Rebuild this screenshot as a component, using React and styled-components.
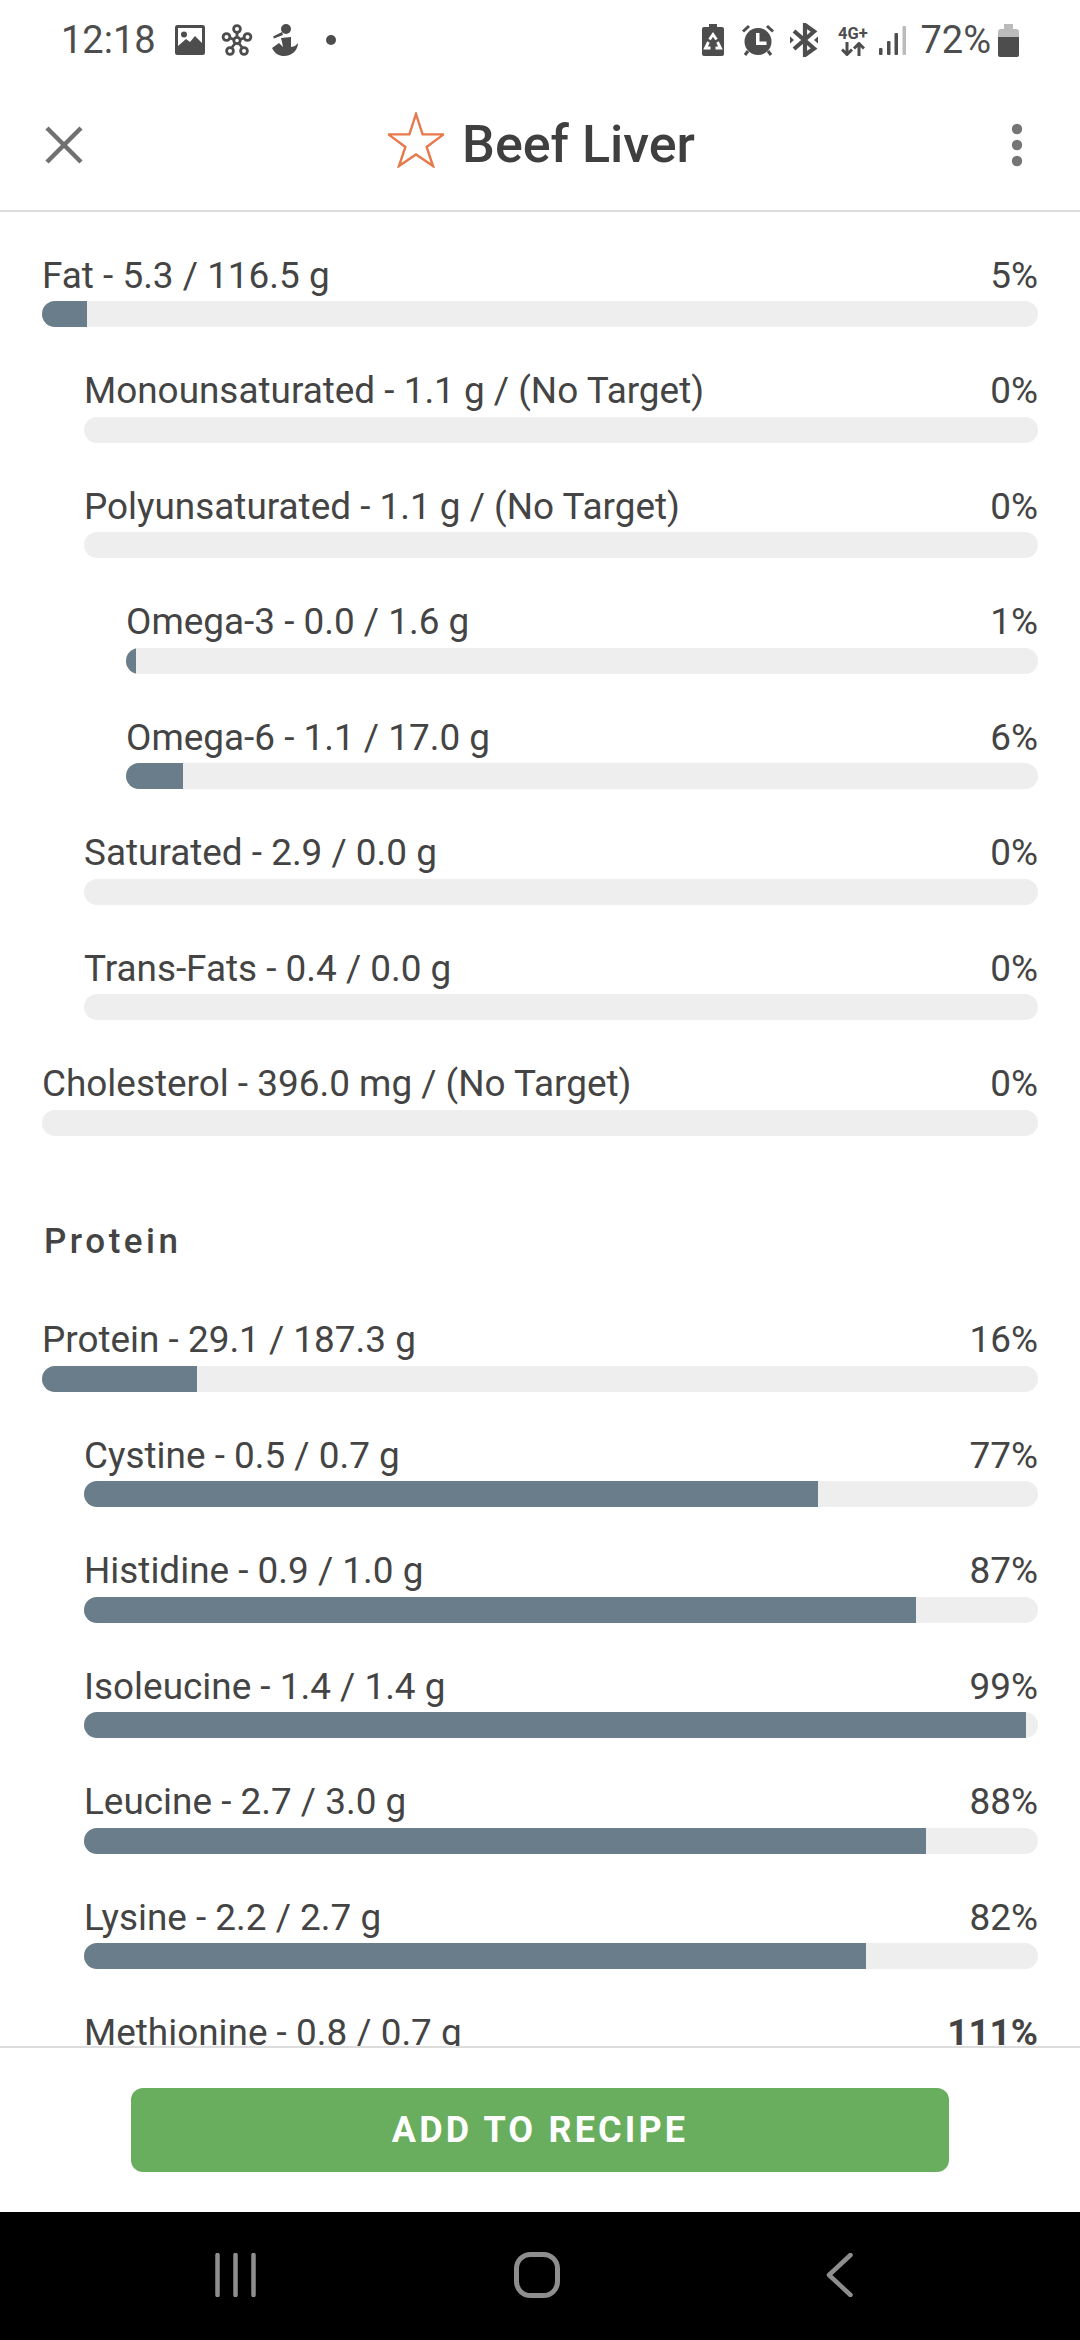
import React from 'react'
import styled, { createGlobalStyle } from 'styled-components'

const GlobalStyle = createGlobalStyle`
  html, body {
    margin: 0;
    padding: 0;
    background: #fff;
  }
  body {
    font-family: Roboto, "Liberation Sans", sans-serif;
  }
`

const Page = styled.div`
  width: 1080px;
  height: 2340px;
  display: flex;
  flex-direction: column;
  background: #fff;
  overflow: hidden;
`

const StatusBar = styled.div`
  height: 80px;
  flex: none;
  display: flex;
  align-items: center;
  justify-content: space-between;
  padding: 0 61px;
  color: #4d4d4d;
  font-size: 38px;
`

const StatusGroup = styled.div`
  display: flex;
  align-items: center;
`

const Slot = styled.span`
  display: flex;
  margin-left: ${p => p.$ml || 0}px;
`

const StatusDot = styled.span`
  width: 10px;
  height: 10px;
  margin-left: 28px;
  border-radius: 50%;
  background: #4d4d4d;
`

const Header = styled.div`
  height: 130px;
  flex: none;
  display: flex;
  align-items: center;
  justify-content: space-between;
  padding: 0 55px 0 44px;
  border-bottom: 2px solid #dcdcdc;
`

const Title = styled.div`
  display: flex;
  align-items: center;
  gap: 18px;
  font-size: 52px;
  font-weight: 500;
  color: #3f3f3f;
  margin-right: 10px;
  padding-bottom: 2px;
`

const StarSlot = styled.span`
  display: flex;
  margin-bottom: 8px;
`

const Scroll = styled.div`
  flex: 1;
  min-height: 0;
  overflow: hidden;
  padding: 38px 42px 0;
`

const Row = styled.div`
  margin-left: ${p => p.$level * 42}px;
  height: 115.5px;
`

const RowText = styled.div`
  display: flex;
  justify-content: space-between;
  align-items: center;
  height: 50px;
  margin-bottom: 1px;
  font-size: 36.9px;
  color: #444;
`

const Pct = styled.span`
  font-weight: ${p => (p.$over ? 700 : 400)};
`

const Track = styled.div`
  height: 26px;
  border-radius: 13px;
  background: #eeeeee;
  overflow: hidden;
`

const Fill = styled.div`
  height: 100%;
  background: #697d8a;
`

const SectionTitle = styled.div`
  font-size: 35px;
  font-weight: 500;
  letter-spacing: 3.5px;
  color: #444;
  margin: 46.5px 0 0 2px;
  height: 94px;
`

const Footer = styled.div`
  height: 166px;
  flex: none;
  box-sizing: border-box;
  border-top: 2px solid #dcdcdc;
  display: flex;
  align-items: center;
  justify-content: center;
  background: #fff;
`

const AddButton = styled.button`
  width: 818px;
  height: 84px;
  border: none;
  border-radius: 12px;
  background: #69ad5e;
  color: #fff;
  font-family: Roboto, "Liberation Sans", sans-serif;
  font-size: 36px;
  font-weight: 700;
  letter-spacing: 3.15px;
`

const NavBar = styled.div`
  height: 128px;
  flex: none;
  box-sizing: border-box;
  padding: 0 6px 3px 0;
  background: #000;
  display: flex;
  align-items: center;
  justify-content: center;
`

const NavSlot = styled.div`
  width: 302px;
  display: flex;
  justify-content: center;
`

const NetType = styled.div`
  display: flex;
  flex-direction: column;
  align-items: center;
  font-size: 16.5px;
  font-weight: 700;
  line-height: 17px;
  color: #4d4d4d;
  width: 31px;
`

const Dots = () => (
  <svg width="16" height="46" viewBox="0 0 16 46" fill="#757575">
    <circle cx="8" cy="7" r="5.2" />
    <circle cx="8" cy="23" r="5.2" />
    <circle cx="8" cy="39" r="5.2" />
  </svg>
)

const Close = () => (
  <svg width="40" height="40" viewBox="0 0 40 40" stroke="#707070" strokeWidth="4.5" fill="none">
    <path d="M3 3l34 34M37 3L3 37" />
  </svg>
)

const Star = () => (
  <svg width="56" height="56" viewBox="0 0 56 56" fill="none" stroke="#e8784a" strokeWidth="2.4">
    <path d="M28 2l6.6 20.4h21L38.6 35 45 54 28 42.5 11 54l6.4-19L0.4 22.4h21z" />
  </svg>
)

const Picture = () => (
  <svg width="30" height="30" viewBox="0 0 30 30">
    <rect width="30" height="30" rx="2.5" fill="#4d4d4d" />
    <path fill="#fff" d="M3 3h24v15l-7-7-5 6-4-3-8 7z" />
    <circle cx="9" cy="9.5" r="3" fill="#4d4d4d" />
  </svg>
)

const Nodes = () => (
  <svg width="32" height="32" viewBox="0 0 32 32" fill="none" stroke="#4d4d4d" strokeWidth="2.8">
    <circle cx="16" cy="16.5" r="3.2" />
    <circle cx="16" cy="5" r="3.4" />
    <circle cx="5.5" cy="13" r="3.4" />
    <circle cx="26.5" cy="13" r="3.4" />
    <circle cx="9" cy="27" r="3.4" />
    <circle cx="23" cy="27" r="3.4" />
    <path d="M16 8.5v5M9 14l4 1.5M23 14l-4 1.5M14 19.5l-3.5 4.5M18 19.5l3.5 4.5" />
  </svg>
)

const Figure = () => (
  <svg width="26" height="32" viewBox="0 0 26 32" fill="#4d4d4d">
    <circle cx="14" cy="5" r="5" />
    <path d="M10 8L1 12.5l1 2L11 11zM9 14l10-1v10l4-1 3-3c0 7-6 13-14 13-5 0-9-2-12-8l7-5 4 4-1-5z" />
  </svg>
)

const Recycle = () => (
  <svg width="22" height="32" viewBox="0 0 22 32">
    <path fill="#4d4d4d" d="M7 0h8v3h5a2 2 0 0 1 2 2v25a2 2 0 0 1-2 2H2a2 2 0 0 1-2-2V5a2 2 0 0 1 2-2h5z" />
    <path fill="none" stroke="#fff" strokeWidth="2.8" d="M7.500 15.500L11 10.500l3.500 5M15.500 18l3 6h-5M8.500 24h-5l3-6" />
  </svg>
)

const Alarm = () => (
  <svg width="34" height="32" viewBox="0 0 34 32">
    <circle cx="17" cy="17.5" r="13.5" fill="#4d4d4d" />
    <path d="M15 9h3.5v8.500h7V21H15z" fill="#fff" />
    <path d="M2 7.500l6-5.500M32 7.500l-6-5.500M7 27l-3 4M27 27l3 4" stroke="#4d4d4d" strokeWidth="3" fill="none" />
  </svg>
)

const Bluetooth = () => (
  <svg width="28" height="34" viewBox="0 0 28 34">
    <path d="M4 8l20 17.500L15 32V2l9 6.500L4 26" fill="none" stroke="#4d4d4d" strokeWidth="4.2" />
    <path d="M0 13.500L4 17l-4 3.500zM28 13.500L24 17l4 3.500z" fill="#4d4d4d" />
  </svg>
)

const Arrows = () => (
  <svg width="24" height="14" viewBox="0 0 24 14" fill="none" stroke="#4d4d4d" strokeWidth="3">
    <path d="M6 0v12M1 7.500l5 5 5-5M18 14V2M13 6.500l5-5 5 5" />
  </svg>
)

const Signal = () => (
  <svg width="27" height="29" viewBox="0 0 27 29">
    <rect x="0" y="22" width="3.5" height="7" rx="1" fill="#4d4d4d" />
    <rect x="8" y="15" width="3.5" height="14" rx="1" fill="#4d4d4d" />
    <rect x="15.5" y="7" width="3.5" height="22" rx="1" fill="#4d4d4d" />
    <rect x="23.5" y="0" width="3.5" height="29" rx="1" fill="#bbb" />
  </svg>
)

const Battery = () => (
  <svg width="21" height="33" viewBox="0 0 21 33">
    <path fill="#bbb" d="M6 0h9v5h3a3 3 0 0 1 3 3v5H0V8a3 3 0 0 1 3-3h3z" />
    <path fill="#4d4d4d" d="M0 13h21v18a2 2 0 0 1-2 2H2a2 2 0 0 1-2-2z" />
  </svg>
)

const NavLines = () => (
  <svg width="41" height="44" viewBox="0 0 41 44" stroke="#8e8e8e" strokeWidth="4.5" strokeLinecap="round">
    <path d="M2.500 2v40M20.500 2v40M38.500 2v40" />
  </svg>
)

const NavHome = () => (
  <svg width="46" height="46" viewBox="0 0 46 46" fill="none" stroke="#8e8e8e" strokeWidth="5">
    <rect x="2.5" y="2.5" width="41" height="41" rx="14" />
  </svg>
)

const NavBack = () => (
  <svg width="27" height="44" viewBox="0 0 27 44" fill="none" stroke="#8e8e8e" strokeWidth="4.5" strokeLinecap="round" strokeLinejoin="round">
    <path d="M24.500 2L3 22l21.500 20" />
  </svg>
)

const fatRows = [
  { text: 'Fat - 5.3 / 116.5 g', pct: '5%', fill: 4.5, level: 0 },
  { text: 'Monounsaturated - 1.1 g / (No Target)', pct: '0%', fill: 0, level: 1 },
  { text: 'Polyunsaturated - 1.1 g / (No Target)', pct: '0%', fill: 0, level: 1 },
  { text: 'Omega-3 - 0.0 / 1.6 g', pct: '1%', fill: 1.1, level: 2 },
  { text: 'Omega-6 - 1.1 / 17.0 g', pct: '6%', fill: 6.2, level: 2 },
  { text: 'Saturated - 2.9 / 0.0 g', pct: '0%', fill: 0, level: 1 },
  { text: 'Trans-Fats - 0.4 / 0.0 g', pct: '0%', fill: 0, level: 1 },
  { text: 'Cholesterol - 396.0 mg / (No Target)', pct: '0%', fill: 0, level: 0 },
]

const proteinRows = [
  { text: 'Protein - 29.1 / 187.3 g', pct: '16%', fill: 15.6, level: 0 },
  { text: 'Cystine - 0.5 / 0.7 g', pct: '77%', fill: 76.9, level: 1 },
  { text: 'Histidine - 0.9 / 1.0 g', pct: '87%', fill: 87.2, level: 1 },
  { text: 'Isoleucine - 1.4 / 1.4 g', pct: '99%', fill: 98.7, level: 1 },
  { text: 'Leucine - 2.7 / 3.0 g', pct: '88%', fill: 88.3, level: 1 },
  { text: 'Lysine - 2.2 / 2.7 g', pct: '82%', fill: 82, level: 1 },
  { text: 'Methionine - 0.8 / 0.7 g', pct: '111%', fill: 100, level: 1, over: true },
]

const NutrientRow = ({ text, pct, fill, level, over }) => (
  <Row $level={level}>
    <RowText>
      <span>{text}</span>
      <Pct $over={over}>{pct}</Pct>
    </RowText>
    <Track>
      <Fill style={{ width: `${fill}%` }} />
    </Track>
  </Row>
)

export default function App() {
  return (
    <Page>
      <GlobalStyle />
      <StatusBar>
        <StatusGroup>
          <span>12:18</span>
          <Slot $ml={19}><Picture /></Slot>
          <Slot $ml={16}><Nodes /></Slot>
          <Slot $ml={19}><Figure /></Slot>
          <StatusDot />
        </StatusGroup>
        <StatusGroup>
          <Recycle />
          <Slot $ml={17}><Alarm /></Slot>
          <Slot $ml={15}><Bluetooth /></Slot>
          <Slot $ml={19}>
            <NetType>
              4G+
              <Arrows />
            </NetType>
          </Slot>
          <Slot $ml={11}><Signal /></Slot>
          <Slot $ml={14}>72%</Slot>
          <Slot $ml={7}><Battery /></Slot>
        </StatusGroup>
      </StatusBar>
      <Header>
        <Close />
        <Title>
          <StarSlot><Star /></StarSlot>
          Beef Liver
        </Title>
        <Dots />
      </Header>
      <Scroll>
        {fatRows.map(row => (
          <NutrientRow key={row.text} {...row} />
        ))}
        <SectionTitle>Protein</SectionTitle>
        {proteinRows.map(row => (
          <NutrientRow key={row.text} {...row} />
        ))}
      </Scroll>
      <Footer>
        <AddButton>ADD TO RECIPE</AddButton>
      </Footer>
      <NavBar>
        <NavSlot><NavLines /></NavSlot>
        <NavSlot><NavHome /></NavSlot>
        <NavSlot><NavBack /></NavSlot>
      </NavBar>
    </Page>
  )
}
